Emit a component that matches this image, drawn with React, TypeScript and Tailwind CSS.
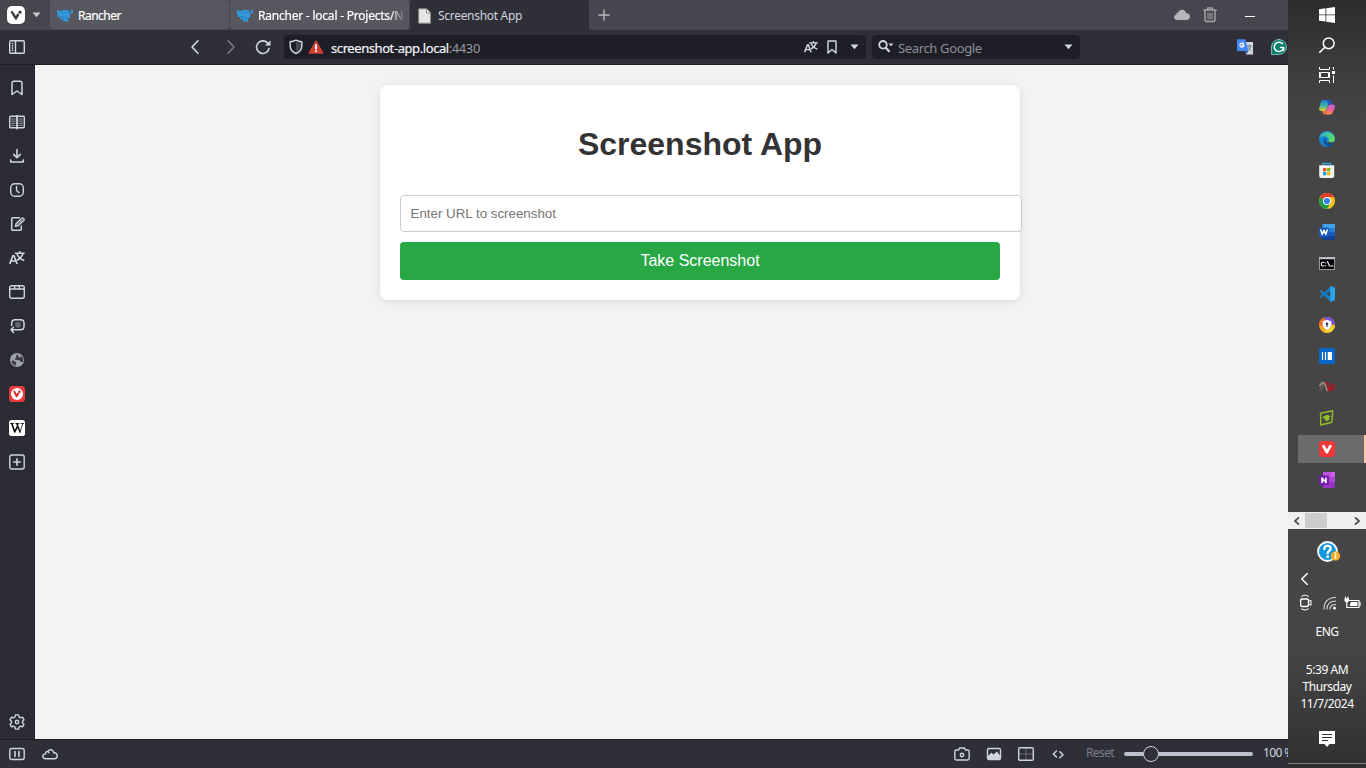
import React from "react";

type IconProps = {
  children: React.ReactNode;
  w?: number;
  h?: number;
  className?: string;
};

function Icon({ children, w = 16, h = 16, className = "" }: IconProps) {
  return (
    <svg
      width={w}
      height={h}
      viewBox={`0 0 ${w} ${h}`}
      fill="none"
      stroke="currentColor"
      strokeWidth="1.4"
      strokeLinecap="round"
      strokeLinejoin="round"
      className={`block shrink-0 ${className}`}
    >
      {children}
    </svg>
  );
}

const Caret = ({ className = "" }: { className?: string }) => (
  <Icon w={9} h={6} className={className}>
    <path d="M.5.5h8L4.500 5.200Z" fill="currentColor" stroke="none" />
  </Icon>
);

const Cow = () => (
  <Icon className="text-[#3497da]">
    <path
      d="M0 2H2V3H5V2H12V5H13V4H14V1.500H15.800V5.500H13V10H11V13.500H6V11.500H3V9H.5V6H0Z"
      fill="currentColor"
      stroke="none"
    />
    <path d="M5.500 3.500V6M3.500 8.500H6V11M8.500 8v2.500H11M9 4.500h2" stroke="#2678b4" strokeWidth=".7" />
  </Icon>
);

const Translate = ({ w = 16 }: { w?: number }) => (
  <svg
    width={w}
    height={w}
    viewBox="0 0 16 16"
    fill="none"
    stroke="currentColor"
    strokeWidth="1.5"
    strokeLinejoin="round"
    className="block shrink-0"
  >
    <path d="M.7 14 4 5.500h.9l3.200 8.500M2 11h4.900" strokeWidth="1.700" />
    <path d="M6 3.200h9.700M10.800 1v2.200M7.800 3.500c1 3 3.500 5.500 7.500 7M14 3.500c-1 3-3 5.300-6 6.700" />
  </svg>
);

const Panels = () => (
  <Icon>
    <rect x=".7" y="1.700" width="14.600" height="12.600" rx="1.200" />
    <path d="M6.500 2v12M2.800 4.500h1.400M2.800 6.800h1.400M2.800 9h1.400M2.800 11.300h1.400" strokeLinecap="butt" />
  </Icon>
);

const sideIcons: React.ReactNode[] = [
  <Icon>
    <path d="M3 14.500V3.200Q3 1.200 5 1.200h6q2 0 2 2v11.300L8 11Z" strokeWidth="1.500" />
  </Icon>,
  <Icon>
    <rect x=".7" y="2.200" width="14.600" height="11.600" rx="1" />
    <path d="M8 2v12.600" strokeWidth="1.800" />
    <path d="M2.500 5h3.700M2.500 7.100h3.700M2.500 9.200h3.700M2.500 11.300h3.700M9.800 5h3.700M9.800 7.100h3.700M9.800 9.200h3.700M9.800 11.300h3.700" strokeWidth=".8" opacity=".8" />
  </Icon>,
  <Icon>
    <path d="M8 1.500v8M4.700 6.400 8 9.700l3.300-3.300M1.700 12v2h12.600v-2" strokeWidth="1.600" />
  </Icon>,
  <Icon>
    <rect x="1.700" y="1.700" width="12.600" height="12.600" rx="4" />
    <path d="M7.500 4.500v4l2.500 2.100" />
  </Icon>,
  <Icon>
    <path d="M10.500 1.700H3.800q-1.100 0-1.100 1.100v10.400q0 1.100 1.100 1.100h7.400q1.100 0 1.100-1.100V10" strokeWidth="1.500" />
    <path d="m6.500 10.300.5-2.500 6-5.600q.6-.5 1.200 0l.8.900q.4.600-.1 1.100L9 9.700Z" />
    <path d="m8 8.600 4.800-4.300" strokeWidth=".7" />
  </Icon>,
  <Translate />,
  <Icon>
    <rect x=".7" y="1.700" width="14.600" height="12.600" rx="2" />
    <path d="M1 5h14M5.700 2v3M10.300 2v3" />
  </Icon>,
  <Icon>
    <circle cx="9" cy="6.700" r="3" fill="#63646f" stroke="none" />
    <path d="M2.700 7.500V5.200q0-3.500 3.500-3.500H11.500q3.500 0 3.500 3.500v3q0 3.500-3.500 3.500H2.200M4.500 9.300l-2.500 2.500 2.500 2.700" strokeWidth="1.500" />
  </Icon>,
  <Icon className="text-[#a1a3ac]">
    <circle cx="8" cy="8" r="7" fill="currentColor" stroke="none" />
    <path
      d="M2.300 9.200Q4 8 5.800 9.200L7.300 10.500 6.500 13.700Q3.500 13 2.300 9.200ZM9 2.300 7 3.500l.3 2L5.500 6.800 7 8l3.500.2L12 10h1.800Q15 6.500 12.500 4L11 5.500 9.500 5Z"
      fill="#3b3c46"
      stroke="none"
    />
  </Icon>,
  <Icon>
    <rect width="16" height="16" rx="3.500" fill="#ef3939" stroke="none" />
    <circle cx="8" cy="8" r="6" fill="#fff" stroke="none" />
    <path d="m5.300 5.600 2.400 4.700 1.500-2.800" stroke="#d92d30" strokeWidth="2" />
    <circle cx="10.500" cy="5.800" r="1.200" fill="#d92d30" stroke="none" />
  </Icon>,
  <Icon>
    <rect width="16" height="16" rx="2.500" fill="#fff" stroke="none" />
    <path d="M1 3.500h4M6.300 3.500h3.900M11.500 3.500H15" stroke="#222" strokeWidth=".9" strokeLinecap="butt" />
    <path d="m2.700 3.500 3.200 8.300 4.700-8.300" stroke="#222" strokeWidth="1" transform="scale(.85 1) translate(.5 0)" />
    <path d="m2.800 3.600 3 8.400L8 7.700M7.800 3.600l3.200 8.400" stroke="#111" strokeWidth="1.500" />
    <path d="m11 12 2.700-8.300" stroke="#222" strokeWidth=".9" />
  </Icon>,
  <Icon>
    <rect x=".8" y="1" width="14.400" height="14" rx="2" />
    <path d="M8 4.700v6.600M4.700 8h6.600" strokeWidth="1.600" />
  </Icon>,
];

const VivaldiApp = () => (
  <Icon>
    <rect width="16" height="16" rx="3.500" fill="#ef3939" stroke="none" />
    <path d="m4.500 5.200 3.500 6 3.300-6" stroke="#fff" strokeWidth="2.700" />
  </Icon>
);

const taskIcons: React.ReactNode[] = [
  <Icon>
    <defs>
      <linearGradient id="cp1" x1="0" y1="0" x2="0" y2="1">
        <stop offset="0" stopColor="#1a78d8" />
        <stop offset=".55" stopColor="#3eb6a0" />
        <stop offset="1" stopColor="#f1c51b" />
      </linearGradient>
      <linearGradient id="cp2" x1="0" y1="0" x2="0" y2="1">
        <stop offset="0" stopColor="#b765df" />
        <stop offset=".5" stopColor="#ec5f9a" />
        <stop offset="1" stopColor="#fb8e4c" />
      </linearGradient>
    </defs>
    <path d="M4.500 0h6l-3 9.700Q7 11 5.500 11H1.500Q-.4 10.500.2 8L1.800 2Q2.500 0 4.500 0Z" fill="url(#cp1)" stroke="none" />
    <path d="M7.500 0H11q1 .2 1.500 2.200l.5 2H9.500Z" fill="#2259c5" stroke="none" />
    <path d="M11 14.500H6L9 6q.5-1.500 2-1.500h3.500q2 .5 1.300 3l-2 5q-.7 2-2.800 2Z" fill="url(#cp2)" stroke="none" />
    <path d="M3 11h4l-1 3.500q-2-.2-2.400-1.700Z" fill="#f07040" stroke="none" />
  </Icon>,
  <Icon>
    <defs>
      <linearGradient id="ed" x1="0" y1="0" x2="1" y2=".4">
        <stop offset="0" stopColor="#27a8df" />
        <stop offset="1" stopColor="#5cdb63" />
      </linearGradient>
    </defs>
    <circle cx="8" cy="8" r="8" fill="#1685d2" stroke="none" />
    <path d="M.2 7A8 8 0 0 1 16 8q-.4 3-3.800 3.200Q9 11 9.300 9.700 11 7 7.500 5.700 3 4.500.2 7Z" fill="url(#ed)" stroke="none" />
    <path d="M6 7q-3 4 .5 7.200Q9 16.200 12 14.800q2-1 3-2.800-4 2-6.800-.2Q6 10 7 6.800Z" fill="#0f4f96" stroke="none" />
    <path d="M9.300 9.800q-.5 1.700 3 1.600 2 0 3.200-1.200-.4 1.600-1.600 2.500-3.500 1.300-5.500-1Z" fill="#444" stroke="none" />
  </Icon>,
  <Icon>
    <path d="M3.700 4V1.500h8.100V4" stroke="#29a9df" strokeWidth="1.300" />
    <path d="M.2 3.200h15V14q0 2-2 2h-11q-2 0-2-2Z" fill="#f2f2f2" stroke="none" />
    <path d="M4 6h3.300v3.300H4Z" fill="#f25022" stroke="none" />
    <path d="M8 6h3.300v3.300H8Z" fill="#7fba00" stroke="none" />
    <path d="M4 10h3.300v3.300H4Z" fill="#00a4ef" stroke="none" />
    <path d="M8 10h3.300v3.300H8Z" fill="#ffb900" stroke="none" />
  </Icon>,
  <Icon>
    <circle cx="8" cy="8" r="8" fill="#fbc116" stroke="none" />
    <path d="M8 8 1.100 4A8 8 0 0 0 8 16l3.500-6Z" fill="#229a48" stroke="none" />
    <path d="M8 8 1.100 4A8 8 0 0 1 14.900 4H8Z" fill="#e33b2e" stroke="none" />
    <circle cx="8" cy="8" r="4" fill="#fff" stroke="none" />
    <circle cx="8" cy="8" r="3.100" fill="#367fed" stroke="none" />
  </Icon>,
  <Icon>
    <path d="M3.500 0H16v4H3.500Z" fill="#41a5ee" stroke="none" />
    <path d="M3.500 4H16v4H3.500Z" fill="#2b7cd3" stroke="none" />
    <path d="M3.500 8H16v4H3.500Z" fill="#185abd" stroke="none" />
    <path d="M3.500 12H16v4H3.500Z" fill="#103f91" stroke="none" />
    <rect y="3.500" width="10" height="9.500" rx=".8" fill="#185abd" stroke="none" />
    <path d="m1.800 6 1.400 4.500L5 6.300l1.800 4.200L8.200 6" stroke="#fff" strokeWidth="1.500" />
  </Icon>,
  <Icon>
    <rect x=".5" y="2.500" width="15" height="12" fill="#050505" stroke="#96999d" strokeWidth="1" strokeLinejoin="miter" />
    <path d="M.5 3.200h15" stroke="#bfc3cb" strokeWidth="2" />
    <path d="M5 7.500q-2.700-1-2.700 1.600T5 10.700M6.700 7.700v.3M6.700 10.500v.3M8.500 6.500l2 4.500M11.700 11H14" stroke="#fff" strokeWidth="1.100" />
  </Icon>,
  <Icon>
    <path d="m.6 5.200 1.600-1.300L12 11.500V16Z" fill="#1684ce" stroke="none" />
    <path d="m.6 10.800 1.600 1.300L12 4.500V0Z" fill="#1377bb" stroke="none" />
    <path d="m11.200 0 4.800 1.800v12.400L11.200 16Z" fill="#27a5ee" stroke="none" />
  </Icon>,
  <Icon>
    <circle cx="8" cy="8" r="8" fill="#f5a52b" stroke="none" />
    <path d="M4 1.100A8 8 0 0 1 16 8L8 6Z" fill="#7650dc" stroke="none" />
    <path d="M0 8A8 8 0 0 1 4.500.9L8 4 4 9.500Z" fill="#ee6b28" stroke="none" />
    <path d="M16 8A8 8 0 0 1 4.500 15.100L8 11Z" fill="#f2ce35" stroke="none" />
    <path d="M3.700 4.200 8 2.800l4.300 1.400v4.300q-.8 3-4.300 4.600Q4.500 11.500 3.700 8.500Z" fill="#f7f8ff" stroke="none" />
    <path d="M8 6.800v2.700" stroke="#353260" strokeWidth="1.100" />
    <circle cx="8" cy="6.800" r="1.200" fill="#353260" stroke="none" />
  </Icon>,
  <Icon>
    <rect width="16" height="16" rx="1.500" fill="#0868c9" stroke="none" />
    <path d="M3.500 4v8M6.500 4v8" stroke="#fff" strokeWidth="1.200" strokeLinecap="butt" />
    <path d="M8.700 4H13v8H8.700Z" fill="#fff" stroke="none" />
  </Icon>,
  <Icon>
    <path d="M.8 11.500Q1.500 6.500 4 5.500M2.500 11Q3.500 6.500 5 5" stroke="#6e5f56" strokeWidth="1.100" />
    <path d="M.8 6.500Q3 2.800 5.200 3.700 6.700 6 8 11.500" stroke="#a38a79" strokeWidth="1.700" />
    <path d="M8 4q2 3 2.200 7 3.800.5 5.200-5" stroke="#a81922" strokeWidth="2.300" />
    <path d="M11.500 3.700q1 2.500.8 5.500" stroke="#7d2226" strokeWidth="1.500" />
  </Icon>,
  <Icon>
    <path d="M1.500 3.200 13.700.8l-.8 11.500L1.800 15Z" stroke="#91bd27" strokeWidth="1.400" />
    <path d="m3 7.500 4.700-2.700L12 6.500l-2 1 .5 2.300-2.800 1.500-2.300-1.700.3-1.200Z" fill="#91bd27" stroke="none" />
  </Icon>,
  <VivaldiApp />,
  <Icon>
    <path d="M4 0h12v5.300H4Z" fill="#ca64ea" stroke="none" />
    <path d="M4 5.300h12v5.400H4Z" fill="#ae4bd5" stroke="none" />
    <path d="M4 10.700h12V16H4Z" fill="#9332bf" stroke="none" />
    <path d="M4 0h8.500v16H4Z" fill="#a83ace" fillOpacity=".35" stroke="none" />
    <rect y="3.500" width="10" height="9.500" rx=".8" fill="#7719aa" stroke="none" />
    <path d="M3 10.500V6l4 4.500V6" stroke="#fff" strokeWidth="1.600" />
  </Icon>,
];

function TabBar() {
  return (
    <div className="flex h-[30px] shrink-0 items-start bg-[#46464e] text-white">
      <div className="flex h-[30px] w-[50px] items-center gap-[7px] pl-[7px]">
        <Icon w={18} h={18}>
          <rect width="18" height="18" rx="5" fill="#fff" stroke="none" />
          <path d="m5 6.200 3.900 6.200 2-3.600" stroke="#3d3d45" strokeWidth="2.500" />
          <circle cx="13" cy="6.200" r="1.600" fill="#3d3d45" stroke="none" />
        </Icon>
        <Caret className="text-[#c8c8cb]" />
      </div>
      <div className="mr-px flex h-[29px] w-[179px] items-center rounded-[3px] bg-[#57575f] pl-[7px] pt-[2px]">
        <Cow />
        <span className="ml-[5px] text-[12px] tracking-[-0.5px] [-webkit-text-stroke:0.2px]">Rancher</span>
      </div>
      <div className="mr-px flex h-[29px] w-[179px] items-center rounded-[3px] bg-[#57575f] pl-[7px] pt-[2px]">
        <Cow />
        <div className="ml-[5px] w-[149px] whitespace-nowrap text-[12px] tracking-[-0.22px] [-webkit-text-stroke:0.2px] [mask-image:linear-gradient(to_right,black_133px,transparent_147px)]">
          Rancher - local - Projects/N
        </div>
      </div>
      <div className="flex h-[30px] w-[179px] items-center rounded-t-[3px] bg-[#2f2f38] pl-[7px] pt-[2px]">
        <Icon>
          <path d="M2 .8h7.500L13.500 5v10.200H2Z" fill="#e5e5e5" stroke="#8b8b8b" strokeWidth="1" />
          <path d="M9.500 1v4h4" fill="#fff" stroke="#8b8b8b" strokeWidth="1" />
        </Icon>
        <span className="ml-[5px] text-[12px] tracking-[-0.3px] text-[#cfd3df]">Screenshot App</span>
      </div>
      <div className="flex h-[30px] flex-1 items-center pl-[9px]">
        <Icon w={12} h={12} className="text-[#b9babd]">
          <path d="M6 .5v11M.5 6h11" strokeLinecap="butt" />
        </Icon>
        <Icon className="ml-auto text-[#b5b6b9]">
          <path d="M4 13q-3.700 0-4-2.800 0-2 2.200-2.600Q2.500 5.500 4.500 5 5.500 2.500 8.500 2.700q2.800.2 3.700 3.300 3.800.5 3.800 3.700-.2 3.100-3.500 3.300Z" fill="currentColor" stroke="none" />
        </Icon>
        <Icon w={14} className="ml-[13px] text-[#a5a6aa]">
          <path d="M.8 3h12.400M4.500 2.800V1h5v1.800M2 3.300v9.200q0 2 2 2h6q2 0 2-2V3.300" />
          <path d="M5 6v6M7 6v6M9 6v6" strokeWidth="1" />
        </Icon>
        <div className="ml-[28px] mr-[33px] mt-[2px] h-px w-[10px] bg-white" />
      </div>
    </div>
  );
}

function AddressBar() {
  return (
    <div className="flex h-[35px] shrink-0 items-center border-b border-[#1d1d26] bg-[#2f2f38] pl-[9px] text-[#d3d7e1]">
      <Panels />
      <Icon w={12} className="ml-[164px] text-[#dce0e9]">
        <path d="M9 1.800 3 8l6 6.200" strokeWidth="1.500" />
      </Icon>
      <Icon w={12} className="ml-[24px] text-[#7d7e87]">
        <path d="M3 1.800 9 8l-6 6.200" strokeWidth="1.500" />
      </Icon>
      <Icon className="ml-[18px]">
        <path d="M13.300 5A6.300 6.300 0 1 0 14 9.500" strokeWidth="1.600" />
        <path d="M15.500 1.500V6.500H10Z" fill="currentColor" stroke="none" />
      </Icon>
      <div className="ml-[13px] flex h-[24px] w-[582px] items-center rounded-[4px] bg-[#1e1e26] pl-[5px]">
        <Icon w={14}>
          <path d="M1.200 2.800Q4 2.700 7 1.200q3 1.500 5.800 1.600V7q0 5-5.800 7.500Q1.200 12 1.200 7Z" />
          <path d="M7 2.500v10.800Q11.500 11 11.700 7V3.700Q9 3.500 7 2.500Z" fill="#454650" stroke="none" />
        </Icon>
        <Icon w={16} className="ml-[5px]">
          <path d="M8 2 14.800 14H1.200Z" fill="#cf4035" stroke="#cf4035" />
          <path d="M8 5.800v4" stroke="#fff" strokeWidth="1.800" />
          <circle cx="8" cy="12.300" r="1" fill="#fff" stroke="none" />
        </Icon>
        <span className="ml-[7px] mt-[3px] text-[13px] tracking-[-0.42px] text-[#989aa3]">
          <span className="text-[#f2f4fa] [-webkit-text-stroke:0.2px]">screenshot-app.local</span>:4430
        </span>
        <div className="ml-auto flex items-center">
          <Translate w={14} />
          <Icon w={10} h={14} className="ml-[9px]">
            <path d="M1 13V1h8v12L5 9.500Z" />
          </Icon>
          <Caret className="ml-[13px] mr-[7px]" />
        </div>
      </div>
      <div className="ml-[6px] flex h-[24px] w-[208px] items-center rounded-[4px] bg-[#1e1e26] pl-[6px]">
        <Icon>
          <circle cx="5" cy="5.800" r="3.800" strokeWidth="1.800" />
          <path d="m8 9 3 3.200" strokeWidth="2.200" />
          <path d="M10.500 4.500h5L13 7.200Z" fill="currentColor" stroke="none" />
        </Icon>
        <span className="ml-[4px] mt-[3px] text-[13px] tracking-[-0.35px] text-[#8d8f98]">Search Google</span>
        <Caret className="ml-auto mr-[7px]" />
      </div>
      <div className="ml-[157px] flex gap-[18px]">
        <Icon>
          <path d="M7 3h9v12.500H9Z" fill="#d8d9dc" stroke="none" />
          <path d="M0 .3h8.500L11.500 12H0Z" fill="#4387f2" stroke="none" />
          <path d="M8 12h3.500L9 15.500Z" fill="#3556a0" stroke="none" />
          <path d="M6.500 4.700Q5.300 3.600 4 4.300q-1.500.8-1 2.500.8 1.800 2.700 1.200 1.300-.5 1.200-1.800H5" stroke="#fff" strokeWidth="1.200" />
          <path d="M10.500 7h4M12.500 6v1M14 7.500q-.7 2.300-3 3.800M11.300 8.500l2.700 3.200" stroke="#65828d" strokeWidth="1" />
        </Icon>
        <Icon>
          <path d="M8 .5A7.500 7.500 0 1 1 8 15.500H.5V8A7.500 7.500 0 0 1 8 .5Z" fill="#087f6d" stroke="#9dcfc5" strokeWidth=".8" />
          <path d="M11.500 4.800A4.700 4.700 0 1 0 12.600 8.500H9.500M12.600 8.500v2.700" stroke="#fff" strokeWidth="1.500" />
        </Icon>
      </div>
    </div>
  );
}

function SidePanel() {
  return (
    <div className="flex w-[35px] shrink-0 flex-col items-center border-r border-[#22222b] bg-[#2b2b34] pt-[6px] text-[#d0d5e0]">
      {sideIcons.map((icon, i) => (
        <div key={i} className="flex h-[34px] items-center">
          {icon}
        </div>
      ))}
      <Icon className="mb-[9px] mt-auto">
        <path d="m6.500.9h3l.5 2 1.500.9 2-.6 1.500 2.600L13.500 7.200v1.600l1.500 1.400-1.500 2.600-2-.6-1.500.9-.5 2h-3l-.5-2-1.500-.9-2 .6L1 10.200l1.500-1.400V7.200L1 5.800l1.500-2.600 2 .6L6 2.900Z" />
        <circle cx="8" cy="8" r="1.700" />
      </Icon>
    </div>
  );
}

function StatusBar() {
  return (
    <div className="flex h-[29px] shrink-0 items-center overflow-hidden border-t border-[#1d1d26] bg-[#2f2f38] pl-[9px] text-[#cfd4df]">
      <Icon>
        <rect x=".8" y="2.500" width="14.400" height="11" rx="2" />
        <path d="M6 5.500v5M10 5.500v5" strokeWidth="1.600" />
      </Icon>
      <Icon className="ml-[17px]">
        <path d="M4 12.800q-3 0-3.200-2.600 0-2 2.700-2.300Q3.500 5.300 5.800 5.500 7 3.300 9.300 3.800q2 .5 2.500 3 3.400-.2 3.400 3 0 3-3 3ZM5.800 5.500q1 .3 1.200 1.300" />
      </Icon>
      <Icon className="ml-[896px]">
        <path d="M2.500 4H4.700L5.500 2h5l.8 2h2.200q1.700 0 1.700 1.700v6.600q0 1.700-1.700 1.700h-11Q.8 14 .8 12.300V5.700Q.8 4 2.500 4Z" />
        <circle cx="8" cy="9" r="1.700" />
      </Icon>
      <Icon className="ml-[16px]">
        <rect x="1.500" y="2.500" width="13" height="11" rx="1.500" />
        <path d="M2 13V10l3.500-3.500 1.800 2L11 5.500 14.300 10v3Z" fill="currentColor" stroke="none" />
      </Icon>
      <Icon className="ml-[16px]">
        <path d="M8 2v12M1 8h14" stroke="#666873" strokeWidth="1" />
        <rect x=".7" y="1.700" width="14.600" height="12.600" rx="1.200" />
      </Icon>
      <Icon className="ml-[16px]">
        <path d="m6.500 5-3.200 3 3.200 3M9.800 5.800 13 8.800l-3.200 3" strokeWidth="1.500" />
      </Icon>
      <span className="ml-[20px] mt-[-2px] w-[38px] shrink-0 whitespace-nowrap text-[12px] tracking-[-0.6px] text-[#7c7e88]">
        Reset
      </span>
      <div className="flex h-4 w-[129px] shrink-0 items-center">
        <div className="h-[4px] w-[19px] rounded-l-full bg-[#bdc1ce]" />
        <div className="h-4 w-4 rounded-full border border-[#d4d8e3]" />
        <div className="h-[4px] flex-1 rounded-r-full bg-[#bdc1ce]" />
      </div>
      <span className="ml-[10px] mt-[-2px] shrink-0 whitespace-nowrap text-[12px] tracking-[-0.6px]">100 %</span>
    </div>
  );
}

function Page() {
  return (
    <main className="flex-1 bg-[#f3f3f3] pl-[345px] pt-5 font-['Liberation_Sans',sans-serif]">
      <div className="h-[215px] w-[640px] rounded-lg bg-white p-5 shadow-[0_2px_10px_rgba(0,0,0,0.1)]">
        <h1 className="mt-[21px] text-center text-[32px] font-bold leading-[36px] text-[#333]">Screenshot App</h1>
        <input
          className="mt-[33px] block h-[37px] w-[622px] rounded-[4px] border border-[#ccc] bg-white px-[9.500px] text-[13.333px] placeholder:text-[#757575]"
          placeholder="Enter URL to screenshot"
        />
        <button className="mt-[10px] block h-[38px] w-[600px] rounded-[4px] bg-[#28a745] text-[16px] text-white">
          Take Screenshot
        </button>
      </div>
    </main>
  );
}

function Taskbar() {
  return (
    <aside className="flex w-[78px] shrink-0 flex-col bg-[linear-gradient(#2c2c2c,#404040_85px,#454545_130px,#454545_650px,#303030_768px)] text-white">
      <div className="flex h-[30px] justify-center pt-[7px]">
        <Icon>
          <path d="M0 2.200 6.500 1.300V7.500H0ZM7.300 1.200 16 0v7.500H7.300ZM0 8.300h6.500v6.300L0 13.700ZM7.300 8.300H16V16l-8.700-1.300Z" fill="#fff" stroke="none" />
        </Icon>
      </div>
      <div className="flex h-[30px] justify-center pt-[7px]">
        <Icon>
          <circle cx="9.700" cy="6.300" r="5.400" strokeWidth="1.500" />
          <path d="M5.800 10.200.8 15.200" strokeWidth="1.600" />
        </Icon>
      </div>
      <div className="flex h-[30px] justify-center pt-[7px]">
        <Icon>
          <path d="M.5 0v2.500h10V0M.5 16v-2.500h10V16M1.500 5.500h8v5h-8ZM.5 5v6M10.500 5v6M14.500 0v2.500M14.500 8.500V16" strokeWidth="1" strokeLinecap="butt" strokeLinejoin="miter" />
          <path d="M13 4h3v3h-3Z" fill="#fff" stroke="none" />
        </Icon>
      </div>
      <div className="mt-[3px] flex h-[419px] flex-col">
        {taskIcons.map((icon, i) =>
          i === 11 ? (
            <div key={i} className="mb-[2px] ml-[10px] mt-px flex h-[28px] border-r-2 border-[#fac7a7] bg-[#6b6b6b] pl-[21px] pt-[6px]">
              {icon}
            </div>
          ) : (
            <div key={i} className="flex h-[31px] justify-center pt-[7px]">
              {icon}
            </div>
          ),
        )}
      </div>
      <div className="flex h-[17px] items-center bg-[#f0f0f0] text-[#505050]">
        <div className="flex w-[17px] justify-center">
          <Icon w={7} h={8}>
            <path d="M5.500.8 2 4l3.500 3.200" strokeWidth="1.800" />
          </Icon>
        </div>
        <div className="h-[15px] w-[22px] bg-[#cdcdcd]" />
        <div className="ml-auto flex w-[17px] justify-center">
          <Icon w={7} h={8}>
            <path d="M1.500.8 5 4 1.500 7.200" strokeWidth="1.800" />
          </Icon>
        </div>
      </div>
      <Icon w={24} h={22} className="ml-[29px] mt-[12px]">
        <circle cx="10.500" cy="10.500" r="9.500" fill="#1296dc" stroke="#fff" strokeWidth="1.800" />
        <path d="M7.300 8q.2-3.300 3.300-3.200 3.200.2 3 2.800-.1 1.500-1.700 2.500-1.200.8-1.200 2.200" stroke="#fff" strokeWidth="2.300" />
        <circle cx="10.600" cy="15.700" r="1.400" fill="#fff" stroke="none" />
        <circle cx="18.500" cy="15" r="4.700" fill="#f5ac20" stroke="none" />
        <path d="M18.500 14.500v3" stroke="#fff" strokeWidth="1.600" />
        <circle cx="18.500" cy="12.200" r="1" fill="#fff" stroke="none" />
      </Icon>
      <Icon w={8} h={12} className="ml-[12px] mt-[10px]">
        <path d="M7.300.5 1.800 6l5.500 5.500" />
      </Icon>
      <div className="mt-[9px] flex h-[19px] pl-[12px]">
        <Icon w={12} h={17}>
          <rect x=".6" y="5" width="7.900" height="7.500" rx="1.500" />
          <path d="m8.500 7.500 2.500-1.200v5L8.500 10M1.500 2.200Q5 -.3 8.500 2.200M1.500 15q3.500 2.500 7 0" strokeWidth="1" />
        </Icon>
        <Icon w={14} h={16} className="ml-[11px] mt-px text-[#dadada]">
          <path d="M1 14Q1 3 12.500 2.500M4 14Q4 6.500 12.500 6M7 14q0-4.500 5.500-4.500" strokeWidth="1.100" />
          <circle cx="11.500" cy="13" r="1.500" fill="#fff" stroke="none" />
        </Icon>
        <Icon w={17} h={14} className="ml-[7px] mt-[2px]">
          <path d="M5.500 4.500h9.500v7h-10" strokeWidth="1.100" strokeLinejoin="miter" />
          <path d="M7 6h6.500v4H6V8Z" fill="#fff" stroke="none" />
          <path d="M16 6.500v3M1.500 1v2M4 1v2M2.800 6v5.500h2" strokeWidth="1.200" />
          <path d="M.5 2.500H5V5L3.500 6.500H2L.5 5Z" fill="#fff" stroke="none" />
        </Icon>
      </div>
      <div className="mt-[11px] text-center text-[12px] leading-[16px] tracking-[-0.55px]">ENG</div>
      <div className="mt-[21px] text-center text-[12px] leading-[17px] tracking-[-0.42px]">
        <div>5:39 AM</div>
        <div>Thursday</div>
        <div>11/7/2024</div>
      </div>
      <Icon className="mx-auto mt-[19px]">
        <path d="M0 0h16v13H10.500L8 16 5.500 13H0Z" fill="#fff" stroke="none" />
        <path d="M3 3.500h10M3 6.500h10M3 9.500h6" stroke="#333" strokeWidth="1" strokeLinecap="butt" />
      </Icon>
      <div className="mt-auto h-[5px] border-t border-[#7d7d7d] bg-[#303030]" />
    </aside>
  );
}

export default function App() {
  return (
    <div className="flex h-[768px] w-[1366px] overflow-hidden font-['Noto_Sans','Open_Sans',sans-serif]">
      <div className="flex w-[1288px] shrink-0 flex-col overflow-hidden">
        <TabBar />
        <AddressBar />
        <div className="flex min-h-0 flex-1">
          <SidePanel />
          <Page />
        </div>
        <StatusBar />
      </div>
      <Taskbar />
    </div>
  );
}
